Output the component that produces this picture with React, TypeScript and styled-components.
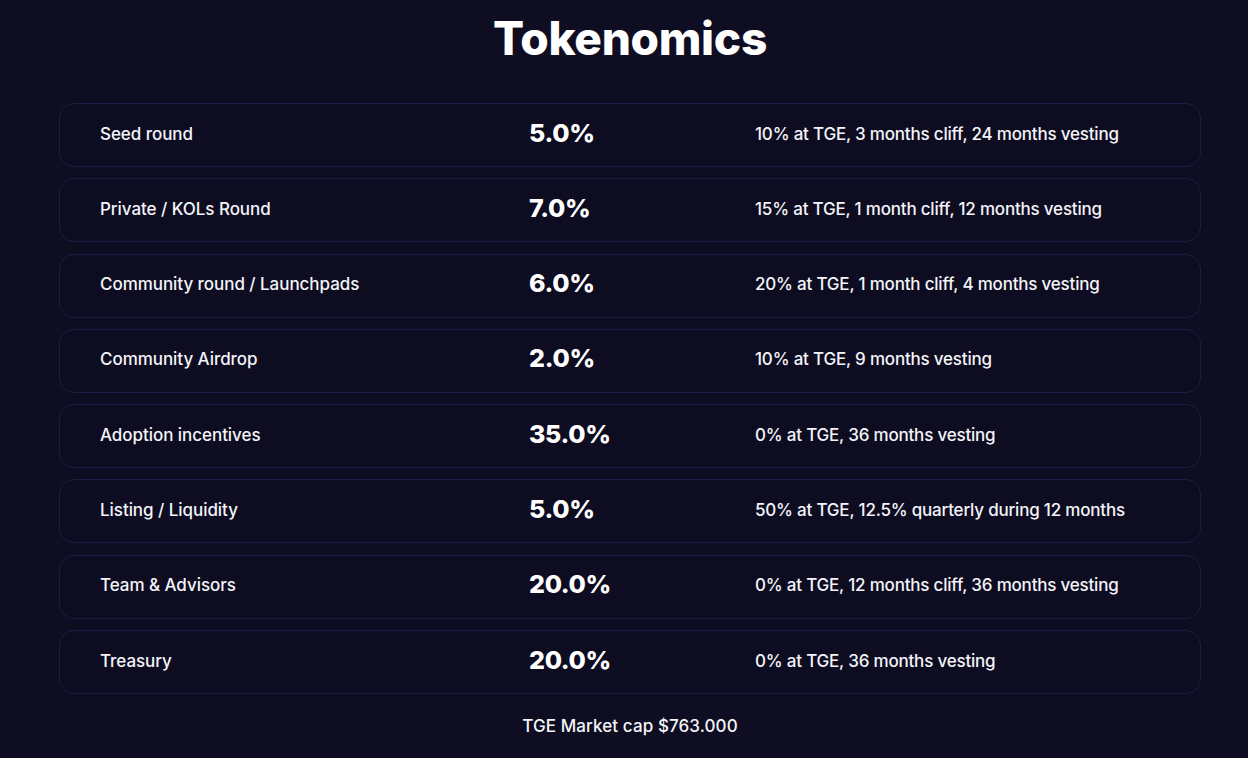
import React from 'react';
import styled, { createGlobalStyle } from 'styled-components';

const GlobalStyle = createGlobalStyle`
  html, body {
    margin: 0;
    padding: 0;
    background: #0e0d22;
  }
  body {
    font-family: Inter, "Noto Sans", sans-serif;
    color: #ffffff;
  }
`;

const Page = styled.div`
  width: 1248px;
  height: 758px;
  background: #0e0d22;
  overflow: hidden;
`;

const Title = styled.h1`
  margin: 0;
  padding-top: 9px;
  padding-left: 12px;
  text-align: center;
  font-size: 46px;
  font-weight: 800;
  letter-spacing: -0.3px;
  line-height: 58px;
  color: #ffffff;
`;

const List = styled.div`
  display: flex;
  flex-direction: column;
  gap: 11.3px;
  width: 1142px;
  margin: 36px 0 0 59px;
`;

const Row = styled.div`
  display: grid;
  grid-template-columns: 429px 226px 1fr;
  align-items: center;
  height: 64px;
  box-sizing: border-box;
  padding-left: 40px;
  border: 1.5px solid #1e1c45;
  border-radius: 15px;
  background: #0d0c21;
`;

const Label = styled.div`
  font-size: 17px;
  font-weight: 500;
  letter-spacing: -0.05px;
  color: #f4f4f8;
  margin-top: -3px;
`;

const Percent = styled.div`
  font-size: 25px;
  font-weight: 800;
  letter-spacing: -0.3px;
  color: #ffffff;
  margin-top: -5px;
`;

const Detail = styled.div`
  font-size: 17px;
  font-weight: 500;
  letter-spacing: -0.2px;
  color: #f4f4f8;
  margin-top: -3px;
`;

const Footer = styled.div`
  text-align: center;
  padding-left: 12px;
  margin-top: 22px;
  font-size: 17px;
  font-weight: 500;
  letter-spacing: 0.1px;
  color: #f4f4f8;
`;

const rows = [
  { label: 'Seed round', pct: '5.0%', detail: '10% at TGE, 3 months cliff, 24 months vesting' },
  { label: 'Private / KOLs Round', pct: '7.0%', detail: '15% at TGE, 1 month cliff, 12 months vesting' },
  { label: 'Community round / Launchpads', pct: '6.0%', detail: '20% at TGE, 1 month cliff, 4 months vesting' },
  { label: 'Community Airdrop', pct: '2.0%', detail: '10% at TGE, 9 months vesting' },
  { label: 'Adoption incentives', pct: '35.0%', detail: '0% at TGE, 36 months vesting' },
  { label: 'Listing / Liquidity', pct: '5.0%', detail: '50% at TGE, 12.5% quarterly during 12 months' },
  { label: 'Team & Advisors', pct: '20.0%', detail: '0% at TGE, 12 months cliff, 36 months vesting' },
  { label: 'Treasury', pct: '20.0%', detail: '0% at TGE, 36 months vesting' },
];

const App: React.FC = () => {
  return (
    <Page>
      <GlobalStyle />
      <Title>Tokenomics</Title>
      <List>
        {rows.map((r, i) => (
          <Row key={i}>
            <Label>{r.label}</Label>
            <Percent>{r.pct}</Percent>
            <Detail>{r.detail}</Detail>
          </Row>
        ))}
      </List>
      <Footer>TGE Market cap $763.000</Footer>
    </Page>
  );
};

export default App;
